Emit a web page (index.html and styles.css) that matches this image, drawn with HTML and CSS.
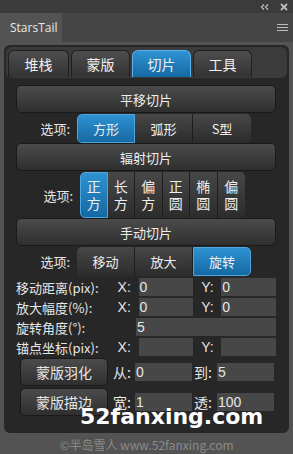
FILE: index.html
```html
<!DOCTYPE html>
<html lang="zh-CN">
<head>
    <meta charset="UTF-8">
    <title>StarsTail</title>
    <link rel="stylesheet" href="styles.css">
</head>
<body>
    <div class="topbar">
        <svg class="icon" width="9" height="6" viewBox="0 0 9 6"><path d="M4 0.5 L1.5 3 L4 5.5 M8 0.5 L5.5 3 L8 5.5" stroke="#bbb" stroke-width="1.3" fill="none"/></svg>
        <svg class="icon" width="8" height="8" viewBox="0 0 8 8"><path d="M1 1 L7 7 M7 1 L1 7" stroke="#bbb" stroke-width="1.8"/></svg>
    </div>
    <div class="header">
        <div class="title">StarsTail</div>
        <svg class="menu" width="11" height="7" viewBox="0 0 11 7"><path d="M0 0.5 H11 M0 3.5 H11 M0 6.5 H11" stroke="#bbb" stroke-width="1"/></svg>
    </div>

    <div class="panel">
        <div class="tabs">
            <div class="tab">堆栈</div>
            <div class="tab">蒙版</div>
            <div class="tab active">切片</div>
            <div class="tab">工具</div>
        </div>

        <div class="content">
            <div class="section">平移切片</div>
            <div class="opts">
                <span class="opt-label">选项:</span>
                <div class="group">
                    <div class="seg on">方形</div>
                    <div class="seg">弧形</div>
                    <div class="seg">S型</div>
                </div>
            </div>

            <div class="section">辐射切片</div>
            <div class="opts opts-six">
                <span class="opt-label">选项:</span>
                <div class="group">
                    <div class="seg on">正<br>方</div>
                    <div class="seg">长<br>方</div>
                    <div class="seg">偏<br>方</div>
                    <div class="seg">正<br>圆</div>
                    <div class="seg">椭<br>圆</div>
                    <div class="seg">偏<br>圆</div>
                </div>
            </div>

            <div class="section">手动切片</div>
            <div class="opts">
                <span class="opt-label">选项:</span>
                <div class="group">
                    <div class="seg">移动</div>
                    <div class="seg">放大</div>
                    <div class="seg on">旋转</div>
                </div>
            </div>

            <div class="fields">
                <div class="field">
                    <span class="f-label">移动距离(pix):</span>
                    <span class="axis">X:</span><span class="input">0</span>
                    <span class="axis ay">Y:</span><span class="input">0</span>
                </div>
                <div class="field">
                    <span class="f-label">放大幅度(%):</span>
                    <span class="axis">X:</span><span class="input">0</span>
                    <span class="axis ay">Y:</span><span class="input">0</span>
                </div>
                <div class="field">
                    <span class="f-label">旋转角度(°):</span>
                    <span class="input wide">5</span>
                </div>
                <div class="field">
                    <span class="f-label">锚点坐标(pix):</span>
                    <span class="axis">X:</span><span class="input"></span>
                    <span class="axis ay">Y:</span><span class="input"></span>
                </div>
            </div>

            <div class="mask-row">
                <div class="mask-btn">蒙版羽化</div>
                <span class="m-label">从:</span><span class="input m-in">0</span>
                <span class="m-label m2">到:</span><span class="input m-in">5</span>
            </div>
            <div class="mask-row">
                <div class="mask-btn">蒙版描边</div>
                <span class="m-label">宽:</span><span class="input m-in">1</span>
                <span class="m-label m2">透:</span><span class="input m-in">100</span>
            </div>
        </div>
    </div>

    <div class="footer">©半岛雪人 www.52fanxing.com</div>
    <div class="watermark">52fanxing.com</div>
</body>
</html>
```

FILE: styles.css
```css
* {
    box-sizing: border-box;
}

body {
    margin: 0;
    width: 293px;
    height: 454px;
    position: relative;
    background-color: #535353;
    color: #e6e6e6;
    font-family: "Noto Sans CJK SC", "Noto Sans", sans-serif;
    font-size: 13px;
    overflow: hidden;
}

.topbar {
    height: 13px;
    background-color: #3b3b3b;
    display: flex;
    justify-content: flex-end;
    align-items: center;
    gap: 11px;
    padding-right: 5px;
}

.header {
    height: 29px;
    background-color: #454545;
    display: flex;
    align-items: stretch;
    justify-content: space-between;
    padding-right: 5px;
}

.title {
    width: 62px;
    background-color: #535353;
    color: #e8e8e8;
    font-family: "Open Sans", sans-serif;
    font-size: 12px;
    line-height: 29px;
    padding-left: 10px;
}

.menu {
    align-self: center;
}

.panel {
    margin: 3px 4px 0;
    height: 388px;
    background-color: #272727;
    border-radius: 6px;
    padding: 2px;
}

.tabs {
    display: flex;
    gap: 2px;
    height: 31px;
    padding: 3px 2px 1px;
    background-color: #3b3b3b;
    border-radius: 6px;
}

.tab {
    width: 59px;
    display: flex;
    align-items: center;
    justify-content: center;
    font-size: 14px;
    color: #f0f0f0;
    border-radius: 6px 6px 0 0;
    background: linear-gradient(#4e4e4e, #333333);
    border: 1px solid #1f1f1f;
    border-bottom: none;
}

.tab:first-child {
    width: 61px;
}

.tab.active {
    background: linear-gradient(#2f93d3, #1569a3);
    border-color: #5fb0e6;
}

.content {
    padding: 7px 11px 0 10px;
}

.section {
    height: 28px;
    line-height: 27px;
    text-align: center;
    border-radius: 5px;
    background: linear-gradient(#4b4b4b, #2f2f2f);
    border: 1px solid #1a1a1a;
    color: #eeeeee;
}

.opts {
    display: flex;
    align-items: center;
    height: 29px;
    margin-top: 1px;
}

.opt-label {
    width: 61px;
    text-align: right;
    padding-right: 7px;
}

.opts-six {
    height: 46px;
}

.opts-six .opt-label {
    width: 64px;
}

.group {
    display: flex;
    height: 100%;
}

.seg {
    width: 58px;
    display: flex;
    align-items: center;
    justify-content: center;
    text-align: center;
    background: linear-gradient(#474747, #2c2c2c);
    border-right: 1px solid #1d1d1d;
    color: #eeeeee;
}

.seg:first-child {
    border-radius: 5px 0 0 5px;
}

.seg:last-child {
    border-radius: 0 5px 5px 0;
    border-right: none;
}

.seg.on {
    background: linear-gradient(#2e92d2, #1569a3);
    border: 1px solid #4ea6e0;
}

.opts-six .seg {
    width: 27.5px;
    font-size: 14px;
    line-height: 17px;
}

.fields {
    margin-top: 1px;
}

.field {
    display: flex;
    align-items: center;
    height: 20px;
}

.f-label {
    width: 102px;
}

.axis {
    width: 21px;
    font-family: "Liberation Sans", sans-serif;
    font-size: 14px;
}

.ay {
    width: 28px;
    padding-left: 8px;
}

.input {
    width: 55px;
    height: 18px;
    line-height: 18px;
    background-color: #474747;
    padding-left: 1px;
    font-size: 14px;
    font-family: "Liberation Sans", sans-serif;
}

.input.wide {
    width: 140px;
    margin-left: 18px;
}

.mask-row {
    display: flex;
    align-items: center;
    height: 30px;
    margin-left: 4px;
}

.mask-btn {
    width: 88px;
    height: 28px;
    line-height: 27px;
    text-align: center;
    font-size: 14px;
    border-radius: 5px;
    background: linear-gradient(#4b4b4b, #2f2f2f);
    border: 1px solid #1a1a1a;
}

.m-label {
    width: 27px;
    padding-left: 5px;
    font-size: 14px;
}

.m2 {
    width: 25px;
    padding-left: 2px;
}

.m-in {
    width: 57px;
}

.footer {
    text-align: center;
    color: #8a8a8a;
    font-size: 12px;
    margin-top: 3px;
}

.watermark {
    position: absolute;
    left: 80px;
    top: 404px;
    color: #ffffff;
    font-family: "DejaVu Sans", sans-serif;
    font-weight: bold;
    font-size: 22px;
    line-height: 26px;
}
```
